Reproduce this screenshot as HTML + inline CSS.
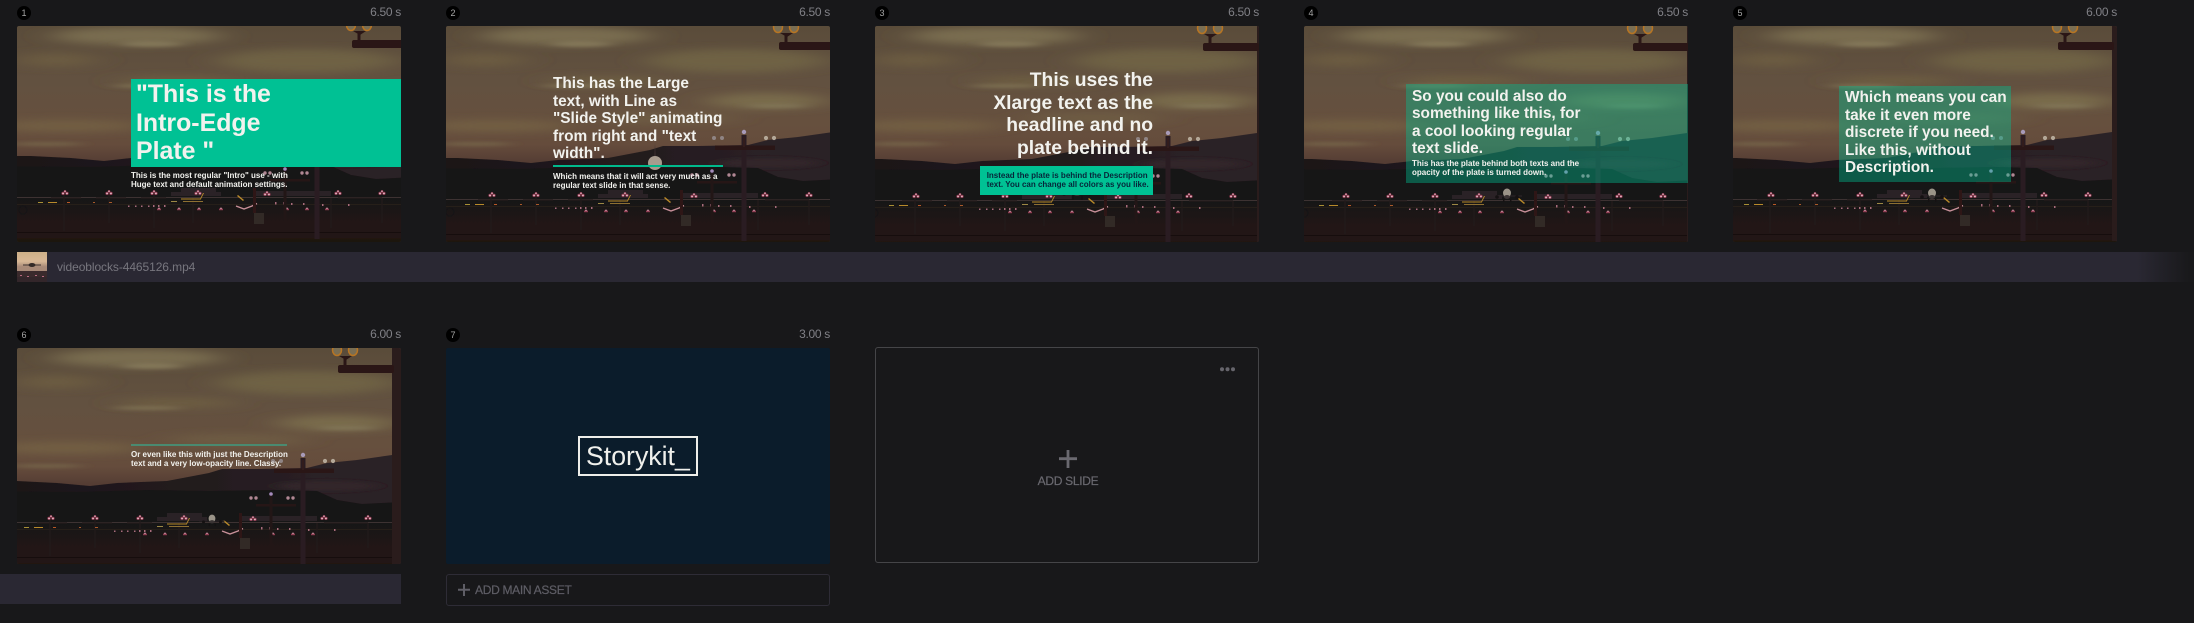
<!DOCTYPE html>
<html><head><meta charset="utf-8">
<style>
html,body{margin:0;padding:0;background:#18181a;width:2194px;height:623px;overflow:hidden}
body{position:relative;font-family:"Liberation Sans",sans-serif}
svg.s{position:absolute;border-radius:2px;display:block}
.a{position:absolute;white-space:pre}
.n{position:absolute;width:14px;height:14px;border-radius:50%;background:#000;color:#a5a5a5;font-size:9px;line-height:14px;text-align:center}
.d{position:absolute;width:100px;text-align:right;color:#808086;font-size:12px;line-height:14px;letter-spacing:-.3px}
.h{position:absolute;white-space:pre;color:#f2f2ee;font-weight:700;font-size:15.4px;line-height:17.4px}
.t{position:absolute;white-space:pre;color:#f2f2ee;font-weight:700;font-size:8px;line-height:9px}
.b{position:absolute;background:#2a2833}
</style></head>
<body>
<svg width="0" height="0" style="position:absolute">
<defs>
<linearGradient id="skyg" x1="0" y1="0" x2="0" y2="1">
<stop offset="0" stop-color="#5a4c3a"/><stop offset=".25" stop-color="#625140"/><stop offset=".45" stop-color="#66503e"/><stop offset=".55" stop-color="#654c3c"/><stop offset=".63" stop-color="#553d34"/><stop offset="1" stop-color="#3a2a28"/>
</linearGradient>
<linearGradient id="hillg" x1="0" y1="0" x2="1" y2="0">
<stop offset="0" stop-color="#1c1518"/><stop offset=".4" stop-color="#211a1c"/><stop offset=".7" stop-color="#2a2025"/><stop offset="1" stop-color="#2d2227"/>
</linearGradient>
<linearGradient id="grg" x1="0" y1="0" x2="0" y2="1">
<stop offset="0" stop-color="#181314"/><stop offset=".4" stop-color="#1a1514"/><stop offset=".45" stop-color="#1f1713"/><stop offset=".9" stop-color="#221812"/><stop offset="1" stop-color="#1a120f"/>
</linearGradient>
<filter id="b6" x="-40%" y="-200%" width="180%" height="500%"><feGaussianBlur stdDeviation="16 4"/></filter>
<filter id="b3" x="-40%" y="-300%" width="180%" height="700%"><feGaussianBlur stdDeviation="8 1.5"/></filter>
<filter id="b0" x="-5%" y="-5%" width="110%" height="110%"><feGaussianBlur stdDeviation=".35"/></filter>
<g id="sky">
<rect width="440" height="216" fill="url(#skyg)"/>
<g filter="url(#b6)">
<ellipse cx="120" cy="10" rx="85" ry="9" fill="#7f7354" opacity=".85"/>
<ellipse cx="40" cy="34" rx="40" ry="7" fill="#6e5f42" opacity=".8"/>
<ellipse cx="290" cy="35" rx="90" ry="12" fill="#716546" opacity=".85"/>
<ellipse cx="320" cy="75" rx="60" ry="8" fill="#7c6f4e" opacity=".9"/>
<ellipse cx="160" cy="55" rx="60" ry="5" fill="#706042" opacity=".8"/>
<ellipse cx="50" cy="100" rx="75" ry="6" fill="#736144" opacity=".9"/>
<ellipse cx="220" cy="92" rx="70" ry="6" fill="#705f44" opacity=".8"/>
</g>
<g filter="url(#b3)">
<ellipse cx="130" cy="60" rx="35" ry="2" fill="#7f7354" opacity=".8"/>
<ellipse cx="30" cy="118" rx="35" ry="2" fill="#75664a" opacity=".8"/>
<ellipse cx="135" cy="18" rx="30" ry="3" fill="#887c5c" opacity=".8"/>
<ellipse cx="330" cy="80" rx="30" ry="2" fill="#85795a" opacity=".8"/>
</g>
</g>
<g id="tr" transform="scale(.85)"><circle cx="-2.3" cy="0.5" r="1.9" fill="#963c54"/><circle cx="2.3" cy="0.5" r="1.9" fill="#963c54"/><circle cx="0" cy="-2" r="1.5" fill="#963c54"/><circle cx="-2.3" cy="0.5" r="1" fill="#e8ccd4"/><circle cx="2.3" cy="0.5" r="1" fill="#e8ccd4"/><circle cx="0" cy="-2" r=".8" fill="#e8ccd4"/></g>
<g id="lo"><circle cx="-1" cy=".4" r="1" fill="#9a4058"/><circle cx="1" cy=".4" r="1" fill="#9a4058"/><circle cx="0" cy="-.6" r=".9" fill="#c8909f"/></g>
<g id="fg" filter="url(#b0)">
<path d="M-40 133L0 133L40 135L73 138L100 135L150 133L192 125L205 121L240 121L290 120L310 115L340 112L375 107L440 100V220H-40Z" fill="url(#hillg)"/>
<ellipse cx="310" cy="138" rx="50" ry="5" fill="#30262a" filter="url(#b3)"/>
<path d="M-40 143L60 144L130 142L192 143L260 142L300 143L320 152L345 156L384 154L440 154V220H-40Z" fill="#181214"/>
<rect x="-40" y="165" width="480" height="55" fill="url(#grg)"/>
<path d="M140 169H190V173H140ZM150 165H185V169H150ZM225 168H300V173H225Z" fill="#2a2425"/>
<rect x="-40" y="174" width="480" height="1" fill="#3d3132"/>
<rect x="-40" y="181" width="480" height=".8" fill="#2a201f"/>
<rect x="-40" y="209" width="480" height="1" fill="#14100e"/>
<g stroke="#241c1c" stroke-width="1.2" fill="none">
<path d="M33 170V208M78 170V200M123 170V205M162 175V200M65 175H95M20 175H50M110 175H135M300 175V205M307 175H351M351 175V200"/>
</g>
<ellipse cx="-8" cy="187" rx="4" ry="4" fill="none" stroke="#181213" stroke-width="1.2"/>
<use href="#tr" x="34" y="170"/><use href="#tr" x="78" y="170"/><use href="#tr" x="123" y="170"/><use href="#tr" x="167" y="170"/>
<use href="#tr" x="236" y="171"/><use href="#tr" x="307" y="170"/><use href="#tr" x="351" y="170"/>
<use href="#lo" x="128" y="186"/><use href="#lo" x="148" y="186"/><use href="#lo" x="168" y="186"/><use href="#lo" x="190" y="186"/><use href="#lo" x="256" y="186"/><use href="#lo" x="276" y="186"/><use href="#lo" x="296" y="186"/>
<g fill="#b88a2c">
<rect x="7" y="179" width="5" height="1" fill="#a88f34"/><rect x="17" y="179" width="9" height="1"/><rect x="36" y="179" width="3" height="1" fill="#b85826"/><rect x="62" y="179" width="2" height="1" fill="#a85a2a"/><rect x="78" y="179" width="3" height="1" fill="#a85a2a"/>
<rect x="150" y="175.500" width="20" height="1"/><rect x="140" y="178" width="6" height="1" fill="#9c8844"/><rect x="152" y="178" width="20" height="1" fill="#8e7032"/>
<path d="M172 170l-3 6 1 0 3-6z"/><path d="M207 172l6 5-1 1-6-5z"/>
</g>
<g fill="#a86c7c">
<rect x="97" y="182.500" width="1.500" height="1.500"/><rect x="104" y="182.500" width="1.500" height="1.500"/><rect x="110" y="182.500" width="1.500" height="1.500"/><rect x="117" y="182.500" width="1.500" height="1.500"/><rect x="122" y="182" width="1.500" height="2"/><rect x="127" y="182" width="1.500" height="2"/><rect x="133" y="182" width="1.500" height="2"/><rect x="244" y="179" width="1.500" height="2.500"/><rect x="252" y="179" width="1.500" height="2.500"/><rect x="260" y="180" width="1.500" height="2"/><rect x="272" y="180" width="1.500" height="2"/><rect x="291" y="181" width="1.500" height="2"/><rect x="317" y="181" width="1.500" height="2"/>
</g>
<path d="M205 183l8 3 8-3 5-2.500" fill="none" stroke="#c8909a" stroke-width="1.400"/>
<rect x="239" y="156" width="40" height="2.500" fill="#271417"/>
<rect x="252.500" y="147" width="3" height="62" fill="#221618"/>
<rect x="223" y="190" width="10" height="11" fill="#302a28"/>
<rect x="222" y="165" width="3" height="25" fill="#2f1719"/>
<circle cx="254" cy="146" r="1.800" fill="#a48cbc"/>
<g fill="#b08894"><circle cx="234" cy="150" r="1.700"/><circle cx="239" cy="150" r="1.700"/><circle cx="271" cy="150" r="1.700"/><circle cx="276" cy="150" r="1.700"/></g>
<rect x="283.500" y="110" width="5" height="106" fill="#2a1f20"/>
<rect x="257" y="120.500" width="60" height="4.500" fill="#2a1518"/>
<rect x="285" y="112" width="2" height="10" fill="#331a1c"/>
<circle cx="286" cy="107" r="2.200" fill="#a89ab8"/>
<g fill="#b4a898"><circle cx="308" cy="113" r="2.100"/><circle cx="316" cy="113" r="2.100"/></g>
<g fill="#8f8484"><circle cx="256" cy="113" r="2"/><circle cx="264" cy="113" r="2"/></g>
<rect x="375" y="0" width="14" height="216" fill="#2a1e1b"/>
<rect x="321" y="17" width="56" height="8" rx="2" fill="#2b1513"/>
<rect x="326.500" y="8" width="3" height="10" fill="#2b1513"/>
<path d="M322 8h13l-6 4z" fill="#2b1513"/>
<ellipse cx="320" cy="2" rx="4.500" ry="5.500" fill="#7a6e52" stroke="#b87424" stroke-width="1.500"/>
<ellipse cx="336" cy="2" rx="4.500" ry="5.500" fill="#7a6e52" stroke="#b87424" stroke-width="1.500"/>
</g>
<g id="pl1"><path d="M-15 0H15" stroke="#2a2326" stroke-width="1.200"/><ellipse cx="0" cy="-3" rx="4" ry="4.500" fill="#9a9488"/><ellipse cx="0" cy="1" rx="3" ry="2" fill="#3a3434"/><circle cx="-10" cy="1" r="1.800" fill="#151112"/><circle cx="10" cy="1" r="1.800" fill="#151112"/><rect x="-4" y="3" width="1.500" height="3" fill="#151112"/><rect x="3" y="3" width="1.500" height="3" fill="#151112"/></g>
</defs>
</svg>

<!-- Row 1 -->
<div class="n" style="left:17px;top:6px">1</div><div class="d" style="left:301px;top:5px">6.50 s</div>
<svg class="s" style="left:17px;top:26px" width="384" height="216" viewBox="0 0 384 216"><use href="#sky"/><use href="#fg" transform="translate(14,-3)"/></svg>
<div class="a" style="left:130.500px;top:79px;width:270.500px;height:87.500px;background:#00c194"></div>
<div class="h" style="left:136px;top:80.200px;font-size:24.900px;line-height:28.500px">"This is the
Intro-Edge
Plate "</div>
<div class="t" style="left:131px;top:170.700px">This is the most regular "Intro" use - with
Huge text and default animation settings.</div>

<div class="n" style="left:446px;top:6px">2</div><div class="d" style="left:730px;top:5px">6.50 s</div>
<svg class="s" style="left:446px;top:26px" width="384" height="216" viewBox="0 0 384 216"><use href="#sky"/><use href="#fg" transform="translate(12,-1)"/><path d="M209 117l1 22h-2z" fill="#3f3232"/><ellipse cx="209" cy="137" rx="7" ry="7" fill="#a89c8e"/><path d="M175 140H245" stroke="#2a2326" stroke-width="1.500"/></svg>
<div class="h" style="left:553px;top:75.300px">This has the Large
text, with Line as
"Slide Style" animating
from right and "text
width".</div>
<div class="a" style="left:553px;top:165px;width:170px;height:2px;background:#00b98c"></div>
<div class="t" style="left:553px;top:171.700px">Which means that it will act very much as a
regular text slide in that sense.</div>

<div class="n" style="left:875px;top:6px">3</div><div class="d" style="left:1159px;top:5px">6.50 s</div>
<svg class="s" style="left:875px;top:26px" width="384" height="216" viewBox="0 0 384 216"><use href="#sky"/><use href="#fg" transform="translate(7,0)"/><use href="#pl1" transform="translate(202,166) scale(1.300)"/></svg>
<div class="h" style="right:1041px;top:70.100px;font-size:19.300px;line-height:22.600px;text-align:right">This uses the
Xlarge text as the
headline and no
plate behind it.</div>
<div class="a" style="left:980.300px;top:166px;width:172.700px;height:28.700px;background:#00c194"></div>
<div class="t" style="left:986.700px;top:170.700px;color:#06263a">Instead the plate is behind the Description
text. You can change all colors as you like.</div>

<div class="n" style="left:1304px;top:6px">4</div><div class="d" style="left:1588px;top:5px">6.50 s</div>
<svg class="s" style="left:1304px;top:26px" width="384" height="216" viewBox="0 0 384 216"><use href="#sky"/><use href="#fg" transform="translate(8,0)"/><use href="#pl1" transform="translate(203,170)"/></svg>
<div class="a" style="left:1406px;top:84.300px;width:282px;height:99px;background:rgba(0,193,148,.4)"></div>
<div class="h" style="left:1412px;top:88px">So you could also do
something like this, for
a cool looking regular
text slide.</div>
<div class="t" style="left:1412px;top:159.400px">This has the plate behind both texts and the
opacity of the plate is turned down.</div>

<div class="n" style="left:1733px;top:6px">5</div><div class="d" style="left:2017px;top:5px">6.00 s</div>
<svg class="s" style="left:1733px;top:26px" width="384" height="216" viewBox="0 0 384 216"><use href="#sky"/><use href="#fg" transform="translate(4,-1)"/><use href="#pl1" transform="translate(199,170)"/></svg>
<div class="a" style="left:1839px;top:86px;width:172px;height:96px;background:rgba(0,193,148,.4)"></div>
<div class="h" style="left:1845px;top:89.300px">Which means you can
take it even more
discrete if you need.
Like this, without
Description.</div>

<!-- Strip 1 -->
<div class="b" style="left:17px;top:252px;width:2177px;height:30px;background:linear-gradient(to right,#2a2833 0,#2a2833 2120px,#19191b 2172px)"></div>
<svg class="s" style="left:17px;top:252px;border-radius:0" width="30" height="30" viewBox="0 0 30 30">
<defs><linearGradient id="tg" x1="0" y1="0" x2="0" y2="1"><stop offset="0" stop-color="#cdb088"/><stop offset=".45" stop-color="#d8b896"/><stop offset=".7" stop-color="#a88a78"/></linearGradient></defs>
<rect width="30" height="21" fill="url(#tg)"/>
<rect y="19" width="30" height="11" fill="#3a2a2c"/>
<rect y="25" width="30" height="5" fill="#33262a"/>
<path d="M6 13H24" stroke="#3d3230" stroke-width="1"/>
<ellipse cx="15" cy="13" rx="3.500" ry="2" fill="#332a28"/>
<g fill="#b86a80"><rect x="3" y="23" width="2" height="1"/><rect x="10" y="24" width="2" height="1"/><rect x="18" y="23" width="2" height="1"/><rect x="25" y="24" width="2" height="1"/></g>
</svg>
<div class="a" style="left:57px;top:259px;font-size:12px;line-height:16px;color:#77767e;letter-spacing:-.08px">videoblocks-4465126.mp4</div>

<!-- Row 2 -->
<div class="n" style="left:17px;top:328px">6</div><div class="d" style="left:301px;top:327px">6.00 s</div>
<svg class="s" style="left:17px;top:348px" width="384" height="216" viewBox="0 0 384 216"><use href="#sky"/><use href="#fg"/><use href="#pl1" transform="translate(195,173) scale(.85)"/></svg>
<div class="a" style="left:131px;top:444px;width:156px;height:2px;background:#4a8a70"></div>
<div class="t" style="left:131px;top:450.400px">Or even like this with just the Description
text and a very low-opacity line. Classy.</div>

<div class="n" style="left:446px;top:328px">7</div><div class="d" style="left:730px;top:327px">3.00 s</div>
<div class="a" style="left:446px;top:348px;width:384px;height:216px;background:#0b1c2b;border-radius:2px"></div>
<div class="a" style="left:578px;top:436px;width:116px;height:36px;border:2px solid #eeeeea"></div>
<div class="a" style="left:586px;top:440px;font-size:26.700px;line-height:32px;color:#f0f0ec">Storykit_</div>

<div class="a" style="left:875px;top:347px;width:382px;height:214px;border:1px solid #454548;border-radius:3px"></div>
<svg class="a" style="left:1216px;top:365px" width="24" height="9" viewBox="0 0 24 9"><g fill="#66656c"><circle cx="6" cy="4.300" r="2"/><circle cx="11.500" cy="4.300" r="2"/><circle cx="17" cy="4.300" r="2"/></g></svg>
<svg class="a" style="left:1058px;top:449px" width="20" height="20" viewBox="0 0 20 20"><path d="M10 1V19M1 9.700H19" stroke="#6a6970" stroke-width="2.800" fill="none"/></svg>
<div class="a" style="left:968px;top:473px;width:200px;text-align:center;font-size:12px;line-height:16px;color:#6a6970;letter-spacing:-.3px;-webkit-text-stroke:.2px #6a6970">ADD SLIDE</div>

<div class="b" style="left:0;top:574px;width:401px;height:30px"></div>
<div class="a" style="left:446px;top:574px;width:382px;height:30px;border:1px solid #2e2c36;border-radius:3px"></div>
<svg class="a" style="left:457px;top:583px" width="14" height="14" viewBox="0 0 14 14"><path d="M7 1V13M1 6.800H13" stroke="#5f5e66" stroke-width="2" fill="none"/></svg>
<div class="a" style="left:475px;top:581.500px;font-size:12px;line-height:16px;color:#5f5e66;letter-spacing:-.3px;-webkit-text-stroke:.2px #5f5e66">ADD MAIN ASSET</div>
</body></html>
